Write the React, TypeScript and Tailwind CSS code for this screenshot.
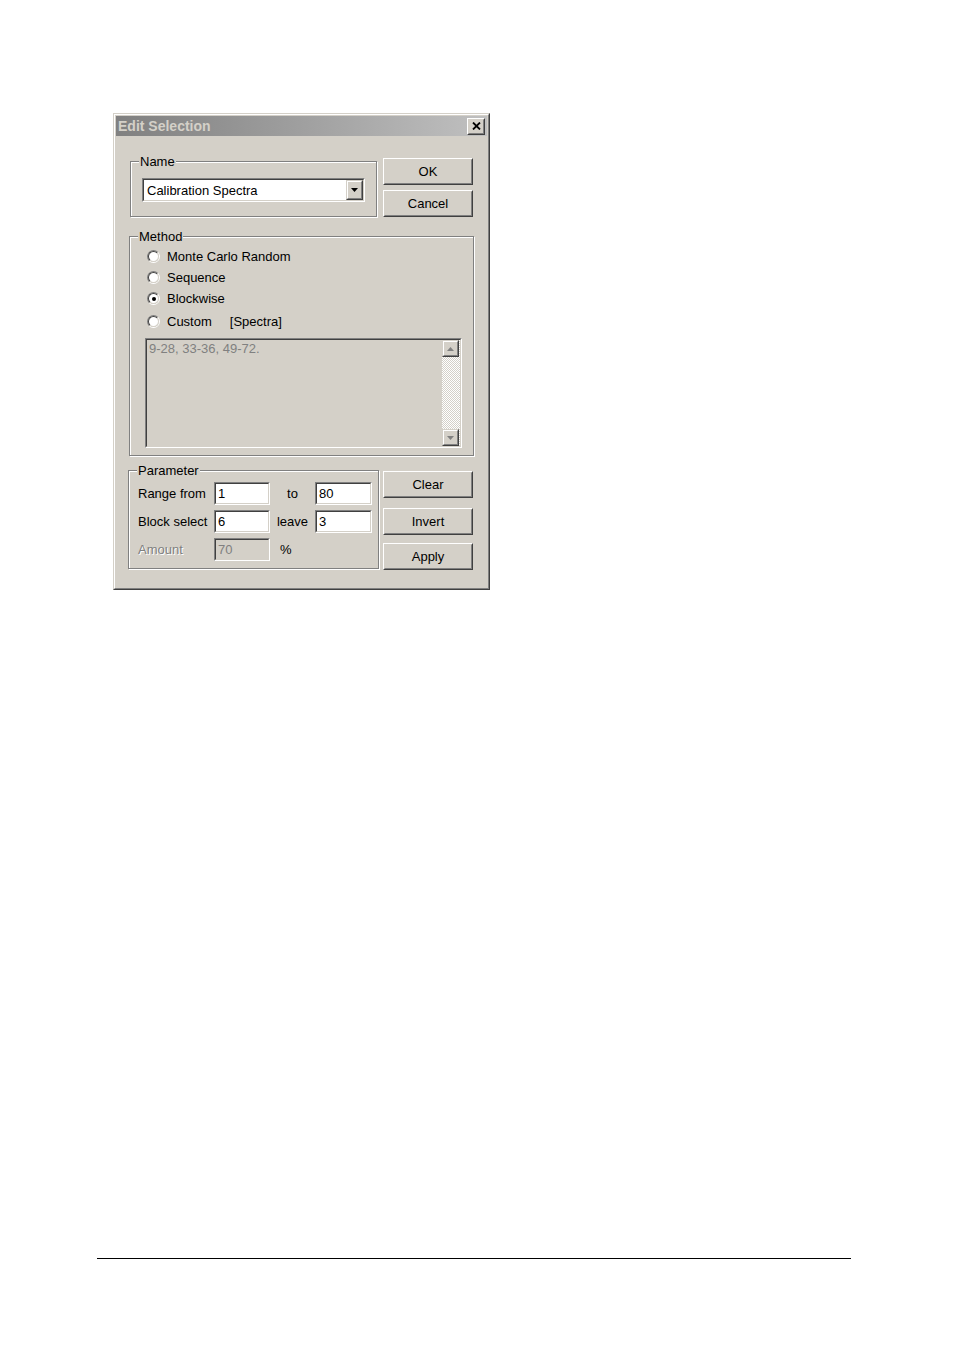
import React from "react";

const font = { fontFamily: '"Liberation Sans", Arial, sans-serif' };

function Btn({ label, className = "" }: { label: string; className?: string }) {
  return (
    <div
      className={`w-[90px] h-[27px] bg-[#d4d0c8] border border-t-white border-l-white border-r-[#404040] border-b-[#404040] ${className}`}
    >
      <div className="w-full h-full border border-t-[#d4d0c8] border-l-[#d4d0c8] border-r-[#808080] border-b-[#808080] flex items-center justify-center text-[13px] text-black leading-none">
        {label}
      </div>
    </div>
  );
}

function Sunken({ className = "", children, bg = "bg-white" }: { className?: string; children?: React.ReactNode; bg?: string }) {
  return (
    <div className={`border border-t-[#808080] border-l-[#808080] border-r-white border-b-white ${className}`}>
      <div className={`w-full h-full border border-t-[#404040] border-l-[#404040] border-r-[#d4d0c8] border-b-[#d4d0c8] ${bg}`}>
        {children}
      </div>
    </div>
  );
}

function Radio({ checked, label, extra }: { checked?: boolean; label: string; extra?: string }) {
  return (
    <div className="flex items-center h-[21px]">
      <div className="w-[13px] h-[13px] rounded-full border border-t-[#808080] border-l-[#808080] border-r-white border-b-white">
        <div className="w-full h-full rounded-full border border-t-[#404040] border-l-[#404040] border-r-[#d4d0c8] border-b-[#d4d0c8] bg-white flex items-center justify-center">
          {checked && <div className="w-[4px] h-[4px] rounded-full bg-black" />}
        </div>
      </div>
      <span className="ml-[7px] text-[13px] text-black leading-none">{label}</span>
      {extra && <span className="ml-[18px] text-[13px] text-black leading-none">{extra}</span>}
    </div>
  );
}

function Group({ title, className = "", children }: { title: string; className?: string; children?: React.ReactNode }) {
  return (
    <fieldset
      className={`border border-[#808080] shadow-[inset_1px_1px_0_#ffffff,1px_1px_0_#ffffff] ${className}`}
    >
      <legend className="ml-[8px] px-[1px] bg-[#d4d0c8] text-[13px] leading-[15px] text-black">{title}</legend>
      {children}
    </fieldset>
  );
}

function ScrollArrow({ up }: { up?: boolean }) {
  return (
    <div className="w-[17px] h-[17px] bg-[#d4d0c8] border border-t-[#d4d0c8] border-l-[#d4d0c8] border-r-[#404040] border-b-[#404040]">
      <div className="w-full h-full border border-t-white border-l-white border-r-[#808080] border-b-[#808080] flex items-center justify-center">
        <svg width="7" height="4" viewBox="0 0 7 4">
          {up ? (
            <path d="M3.5 0 L7 4 L0 4 Z" fill="#808080" />
          ) : (
            <path d="M0 0 L7 0 L3.5 4 Z" fill="#808080" />
          )}
        </svg>
      </div>
    </div>
  );
}

export default function App() {
  return (
    <div className="w-[954px] h-[1350px] bg-white" style={font}>
      <div className="pt-[113px] pl-[113px]">
        {/* Window */}
        <div className="w-[377px] h-[477px] border border-t-[#d4d0c8] border-l-[#d4d0c8] border-r-[#404040] border-b-[#404040]">
          <div className="w-full h-full border border-t-white border-l-white border-r-[#808080] border-b-[#808080] bg-[#d4d0c8] p-[1px] flex flex-col">
            {/* Title bar */}
            <div className="h-[20px] bg-gradient-to-r from-[#808080] to-[#c0c0c0] flex items-center pl-[2px] pr-[2px]">
              <span className="text-[14px] font-bold text-[#d4d0c8] leading-none">Edit Selection</span>
              <div className="ml-auto w-[18px] h-[17px] bg-[#d4d0c8] border border-t-white border-l-white border-r-[#404040] border-b-[#404040]">
                <div className="w-full h-full border border-t-[#d4d0c8] border-l-[#d4d0c8] border-r-[#808080] border-b-[#808080] flex items-center justify-center">
                  <svg width="9" height="8" viewBox="0 0 9 8">
                    <path d="M1 0.5 L8 7.5 M8 0.5 L1 7.5" stroke="#000" strokeWidth="1.8" />
                  </svg>
                </div>
              </div>
            </div>

            {/* Row 1: Name + OK/Cancel */}
            <div className="flex items-start">
              <Group title="Name" className="ml-[14px] mt-[18px] w-[247px] h-[63px]">
                <Sunken className="ml-[11px] mt-[9px] w-[223px] h-[24px]">
                  <div className="flex items-center h-full">
                    <span className="pl-[3px] text-[13px] leading-none text-black">Calibration Spectra</span>
                    <div className="ml-auto w-[17px] h-full bg-[#d4d0c8] border border-t-[#d4d0c8] border-l-[#d4d0c8] border-r-[#404040] border-b-[#404040]">
                      <div className="w-full h-full border border-t-white border-l-white border-r-[#808080] border-b-[#808080] flex items-center justify-center">
                        <svg width="7" height="4" viewBox="0 0 7 4">
                          <path d="M0 0 L7 0 L3.5 4 Z" fill="#000" />
                        </svg>
                      </div>
                    </div>
                  </div>
                </Sunken>
              </Group>
              <div className="ml-auto mr-[14px] mt-[22px] flex flex-col gap-[5px]">
                <Btn label="OK" />
                <Btn label="Cancel" />
              </div>
            </div>

            {/* Method */}
            <Group title="Method" className="ml-[13px] mt-[12px] w-[345px] h-[227px]">
              <div className="ml-[17px] mt-[2px] flex flex-col">
                <Radio label="Monte Carlo Random" />
                <Radio label="Sequence" />
                <Radio label="Blockwise" checked />
                <div className="mt-[2px]">
                  <Radio label="Custom" extra="[Spectra]" />
                </div>
              </div>
              <Sunken className="ml-[15px] mt-[6px] w-[317px] h-[110px]" bg="bg-[#d4d0c8]">
                <div className="flex h-full">
                  <div className="flex-1 pl-[2px] pt-[1px] text-[13px] leading-[16px] text-[#808080]">9-28, 33-36, 49-72.</div>
                  <div className="w-[18px] h-full flex flex-col bg-[repeating-conic-gradient(#ffffff_0%_25%,#d4d0c8_0%_50%)] bg-[length:2px_2px]">
                    <ScrollArrow up />
                    <div className="flex-1" />
                    <ScrollArrow />
                  </div>
                </div>
              </Sunken>
            </Group>

            {/* Parameter + buttons */}
            <div className="flex items-start mt-[7px]">
              <Group title="Parameter" className="ml-[12px] w-[251px] h-[106px]">
                <div className="ml-[9px] mt-[4px] grid grid-cols-[76px_56px_45px_57px] gap-y-[5px] items-center text-[13px] leading-none text-black">
                  <span>Range from</span>
                  <Sunken className="h-[23px]">
                    <div className="pl-[2px] h-full flex items-center">1</div>
                  </Sunken>
                  <span className="text-center">to</span>
                  <Sunken className="h-[23px]">
                    <div className="pl-[2px] h-full flex items-center">80</div>
                  </Sunken>

                  <span>Block select</span>
                  <Sunken className="h-[23px]">
                    <div className="pl-[2px] h-full flex items-center">6</div>
                  </Sunken>
                  <span className="text-center">leave</span>
                  <Sunken className="h-[23px]">
                    <div className="pl-[2px] h-full flex items-center">3</div>
                  </Sunken>

                  <span className="text-[#808080] [text-shadow:1px_1px_0_#ffffff]">Amount</span>
                  <Sunken className="h-[23px]" bg="bg-[#d4d0c8]">
                    <div className="pl-[2px] h-full flex items-center text-[#808080]">70</div>
                  </Sunken>
                  <span className="pl-[10px]">%</span>
                  <span />
                </div>
              </Group>
              <div className="ml-auto mr-[14px] mt-[8px] flex flex-col">
                <Btn label="Clear" />
                <Btn label="Invert" className="mt-[10px]" />
                <Btn label="Apply" className="mt-[8px]" />
              </div>
            </div>
          </div>
        </div>
      </div>
      <div className="ml-[97px] mt-[668px] w-[754px] h-[1px] bg-black" />
    </div>
  );
}
